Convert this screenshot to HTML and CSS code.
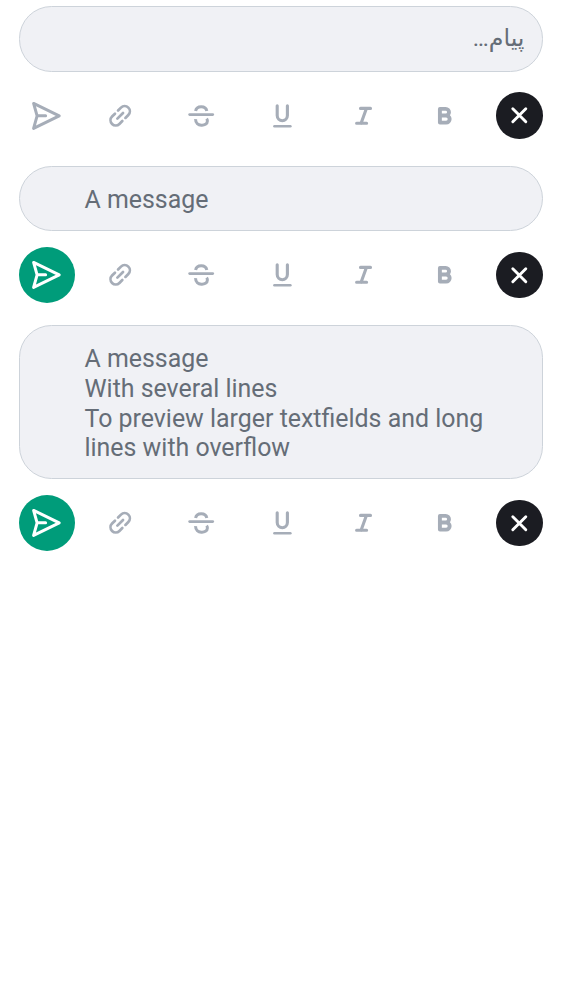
FILE: index.html
```
<!DOCTYPE html>
<html lang="fa">
<head>
<meta charset="utf-8">
<title>Message composer</title>
<link rel="stylesheet" href="styles.css">
</head>
<body>
<svg class="defs" width="0" height="0">
  <symbol id="send" viewBox="0 0 56 56"><path d="M14.6 15.4 40.2 27.8 14.6 40.4 18.1 27.8ZM18.1 27.8H26.6" stroke-width="3"/></symbol>
  <symbol id="link" viewBox="0 0 48 48"><g transform="translate(24.2 23.8) rotate(-45)" stroke-width="2.7"><path d="M-2.2-5.2H-6.3a5.2 5.2 0 0 0 0 10.4H-2.2M2.2-5.2H6.3a5.2 5.2 0 0 1 0 10.4H2.2M-4 0H4"/></g></symbol>
  <symbol id="strike" viewBox="0 0 48 48"><path d="M12.6 22.6H35.8" stroke-width="2.6"/><path d="M18.6 18.9C19.6 13.2 28.8 13.2 29.8 18.9M18.6 27.2C18.2 34.9 30.4 34.9 30.4 29Q30.4 27.6 29.6 26.6" stroke-width="3" stroke-linecap="butt"/></symbol>
  <symbol id="underline" viewBox="0 0 48 48"><path d="M19.2 13.8V23.6a5.1 5.1 0 0 0 10.2 0V13.8" stroke-width="3.1"/><path d="M16.4 34.3H32.4" stroke-width="2.5"/></symbol>
  <symbol id="italic" viewBox="0 0 48 48"><path d="M20.5 16.4H30.5M16.6 31.3H26.6M26.4 16.4 21.1 31.3" stroke-width="3.1"/></symbol>
  <symbol id="bold" viewBox="0 0 48 48"><path d="M18.9 16.9H24.7a3 3 0 0 1 0 6.6H18.9ZM18.9 23.5H25.1a3.5 3.5 0 0 1 0 7.1H18.9Z" stroke-width="3.9"/></symbol>
  <symbol id="close" viewBox="0 0 48 48"><path d="M17.3 17.3 30.7 30.7M30.7 17.3 17.3 30.7" stroke-width="3"/></symbol>
</svg>
<main class="screen">
  <section class="composer composer-empty">
    <div class="field placeholder" dir="rtl">پیام…</div>
    <div class="toolbar">
      <span class="send"><svg><use href="#send"/></svg></span>
      <div class="formats"><svg><use href="#link"/></svg><svg><use href="#strike"/></svg><svg><use href="#underline"/></svg><svg><use href="#italic"/></svg><svg><use href="#bold"/></svg></div>
      <span class="close"><svg><use href="#close"/></svg></span>
    </div>
  </section>
  <section class="composer">
    <div class="field">A message</div>
    <div class="toolbar">
      <span class="send active"><svg><use href="#send"/></svg></span>
      <div class="formats"><svg><use href="#link"/></svg><svg><use href="#strike"/></svg><svg><use href="#underline"/></svg><svg><use href="#italic"/></svg><svg><use href="#bold"/></svg></div>
      <span class="close"><svg><use href="#close"/></svg></span>
    </div>
  </section>
  <section class="composer">
    <div class="field">A message<br>With several lines<br>To preview larger textfields and long lines with overflow</div>
    <div class="toolbar">
      <span class="send active"><svg><use href="#send"/></svg></span>
      <div class="formats"><svg><use href="#link"/></svg><svg><use href="#strike"/></svg><svg><use href="#underline"/></svg><svg><use href="#italic"/></svg><svg><use href="#bold"/></svg></div>
      <span class="close"><svg><use href="#close"/></svg></span>
    </div>
  </section>
</main>
</body>
</html>
```
FILE: styles.css
```
* { box-sizing: border-box; }
body { margin: 0; background: #fff; font-family: Roboto, "DejaVu Sans", sans-serif; }
svg { display: block; fill: none; stroke: currentColor; stroke-linecap: round; stroke-linejoin: round; }
.defs { position: absolute; }
.screen { display: flex; flex-direction: column; gap: 22px; padding: 6px 19px; }
.composer { display: flex; flex-direction: column; gap: 16px; }
.composer-empty { gap: 15.5px; padding-bottom: .5px; }
.field {
  padding: 18px 50px 14.8px 64.5px;
  border: 1px solid #cdd3da;
  border-radius: 32.5px;
  background: #f0f1f5;
  color: #656d77;
  font-size: 24.92px;
  line-height: 29.8px;
  min-height: 65px;
}
.placeholder { height: 66px; padding: 17px 17.5px; font-size: 23.8px; }
.toolbar { display: flex; align-items: center; height: 56px; color: #a6adb8; }
.send { width: 56px; height: 56px; border-radius: 50%; }
.send svg { width: 56px; height: 56px; }
.active { background: #009c7a; color: #fff; }
.formats { display: flex; gap: 33.2px; margin-left: 21px; }
.formats svg { width: 48px; height: 48px; }
.close { display: flex; width: 46.6px; height: 46.6px; margin-left: auto; border-radius: 50%; background: #1b1c22; color: #fff; }
.close svg { width: 100%; height: 100%; }
```
